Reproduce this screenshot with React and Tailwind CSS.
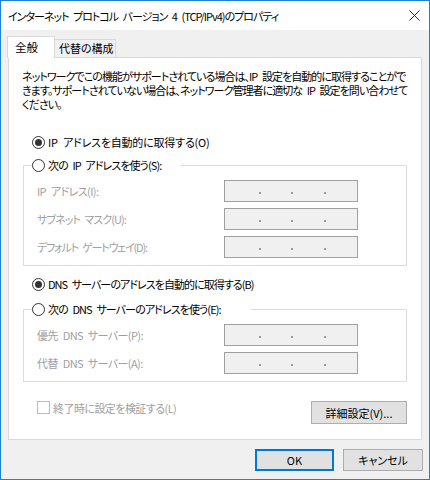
import React from 'react';

const font = "font-['Noto_Sans_CJK_JP','Noto_Sans',sans-serif] [font-feature-settings:'palt']";

// en space keeps a visible gap once tracking is tightened
const s = '\u2002';

const Radio = ({ checked }) => (
  <span className="w-[13px] h-[13px] rounded-full border border-[#333333] bg-white flex items-center justify-center shrink-0">
    {checked && <span className="w-[7px] h-[7px] rounded-full bg-[#333333]" />}
  </span>
);

const IpBox = () => (
  <div className="w-[134px] h-[22px] border border-[#a0a0a0] bg-[#f0f0f0] flex items-center">
    <span className="w-[34px]" />
    <span className="w-[2px] h-[2px] bg-[#9a9a9a] mt-[3px]" />
    <span className="w-[30px]" />
    <span className="w-[2px] h-[2px] bg-[#9a9a9a] mt-[3px]" />
    <span className="w-[31px]" />
    <span className="w-[2px] h-[2px] bg-[#9a9a9a] mt-[3px]" />
  </div>
);

const Row = ({ label, track }) => (
  <div className="flex items-center justify-between pl-[13px] pr-[48px]">
    <span className={`text-[#a0a0a0] whitespace-nowrap ${track}`}>{label}</span>
    <IpBox />
  </div>
);

const Group = ({ title, rows, legendPad }) => (
  <fieldset className="border border-[#dcdcdc] mx-[1px] pb-[7px]">
    <legend className={`ml-[8px] h-[16px] flex items-center gap-[3px] bg-white ${legendPad}`}>
      <Radio />
      <span className="tracking-[-0.9px] whitespace-nowrap">{title}</span>
    </legend>
    <div className="flex flex-col gap-[6px] pt-[7px]">
      {rows.map((r) => (
        <Row key={r.label} label={r.label} track={r.track} />
      ))}
    </div>
  </fieldset>
);

export default function App() {
  return (
    <div className={`w-[430px] h-[480px] border border-[#1883d7] bg-[#f0f0f0] flex flex-col text-[11px] leading-[14px] text-black ${font}`}>
      {/* title bar */}
      <div className="h-[29px] bg-white flex items-center justify-between pl-[7px] pr-[9px] shrink-0">
        <span className="text-[11px] tracking-[-1px] whitespace-nowrap">
          {`インターネット${s}プロトコル${s}バージョン${s}4${s}(TCP/IPv4)のプロパティ`}
        </span>
        <svg width="11" height="11" viewBox="0 0 11 11">
          <path d="M0.5 0.5 L10.5 10.5 M10.5 0.5 L0.5 10.5" stroke="#222" strokeWidth="1" fill="none" />
        </svg>
      </div>

      {/* tabs */}
      <div className="flex items-end pl-[6px] pt-[6px]">
        <div className="w-[48px] h-[22px] bg-white border border-b-0 border-[#d9d9d9] -mb-px relative z-10 pl-[7px] pt-[3px] text-[11.5px]">
          全般
        </div>
        <div className="w-[61px] h-[18px] bg-[#f0f0f0] border border-l-0 border-b-0 border-[#d9d9d9] pl-[4px] pt-[1px]">
          代替の構成
        </div>
      </div>

      {/* panel */}
      <div className="mx-[7px] h-[383px] bg-white border border-[#d9d9d9] px-[13px] pt-[11px] flex flex-col">
        <p className="whitespace-nowrap tracking-[-0.95px]">
          {`ネットワークでこの機能がサポートされている場合は、IP${s}設定を自動的に取得することがで`}
          <br />
          {`きます。サポートされていない場合は、ネットワーク管理者に適切な${s}IP${s}設定を問い合わせて`}
          <br />
          ください。
        </p>

        <div className="mt-[23px] ml-[10px] h-[16px] flex items-center gap-[3px]">
          <Radio checked />
          <span className="whitespace-nowrap tracking-[-0.2px]">{`IP${s}アドレスを自動的に取得する(O)`}</span>
        </div>

        <div className="mt-[7px]">
          <Group
            title={`次の${s}IP${s}アドレスを使う(S):`}
            legendPad="pr-[20px]"
            rows={[
              { label: `IP${s}アドレス(I):`, track: 'tracking-[-0.6px]' },
              { label: `サブネット${s}マスク(U):`, track: 'tracking-[-0.95px]' },
              { label: `デフォルト${s}ゲートウェイ(D):`, track: 'tracking-[-1.2px]' },
            ]}
          />
        </div>

        <div className="mt-[10px] ml-[10px] h-[16px] flex items-center gap-[3px]">
          <Radio checked />
          <span className="whitespace-nowrap tracking-[-0.95px]">{`DNS${s}サーバーのアドレスを自動的に取得する(B)`}</span>
        </div>

        <div className="mt-[9px]">
          <Group
            title={`次の${s}DNS${s}サーバーのアドレスを使う(E):`}
            legendPad="pr-[30px]"
            rows={[
              { label: `優先${s}DNS${s}サーバー(P):`, track: 'tracking-[-0.6px]' },
              { label: `代替${s}DNS${s}サーバー(A):`, track: 'tracking-[-0.6px]' },
            ]}
          />
        </div>

        <div className="mt-[19px] flex items-start justify-between">
          <div className="ml-[15px] flex items-center gap-[3px] h-[13px]">
            <span className="w-[13px] h-[13px] border border-[#bcbcbc] bg-white" />
            <span className="text-[#a0a0a0] whitespace-nowrap tracking-[-0.55px]">終了時に設定を検証する(L)</span>
          </div>
          <button className="w-[96px] h-[23px] bg-[#e1e1e1] border border-[#adadad] mr-[1px]">
            詳細設定(V)...
          </button>
        </div>
      </div>

      {/* footer buttons */}
      <div className="flex justify-end gap-[9px] pr-[6px] pt-[9px]">
        <button className="w-[79px] h-[22px] bg-[#e1e1e1] border-2 border-[#0078d7]">OK</button>
        <button className="w-[80px] h-[22px] bg-[#e1e1e1] border border-[#adadad]">キャンセル</button>
      </div>
    </div>
  );
}
